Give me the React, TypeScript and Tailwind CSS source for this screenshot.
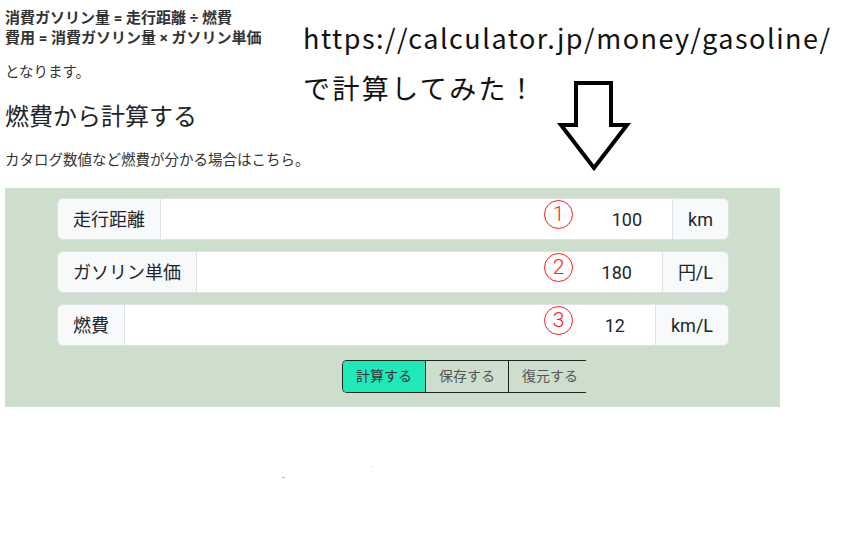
const rows = [
  { label: '走行距離', value: '100', unit: 'km', mark: '1' },
  { label: 'ガソリン単価', value: '180', unit: '円/L', mark: '2' },
  { label: '燃費', value: '12', unit: 'km/L', mark: '3' },
];

const buttons = [
  { label: '計算する', active: true },
  { label: '保存する', active: false },
  { label: '復元する', active: false },
];

function DownArrow() {
  return (
    <svg className="absolute left-[555px] top-[78px]" width="78" height="96" viewBox="555 78 78 96">
      <polygon
        points="576,83 611,83 611,125 627,125 594,168 561,125 576,125"
        fill="white"
        stroke="black"
        strokeWidth="4"
        strokeLinejoin="miter"
      />
    </svg>
  );
}

export default function App() {
  return (
    <div className="relative w-[865px] h-[535px] overflow-hidden bg-white text-[#333] font-['Roboto','Noto_Sans_CJK_JP',sans-serif]">
      <div className="flex flex-col pl-[5px] pt-[8px]">
        <p className="text-[15px] leading-[20px] font-bold">
          消費ガソリン量 = 走行距離 ÷ 燃費
          <br />
          費用 = 消費ガソリン量 × ガソリン単価
        </p>
        <p className="mt-[15px] text-[14.5px] leading-[20px]">となります。</p>
        <h3 className="mt-[18px] text-[24px] leading-[32px] text-[#212529]">燃費から計算する</h3>
        <p className="mt-[18px] text-[14.5px] leading-[20px]">カタログ数値など燃費が分かる場合はこちら。</p>

        <div className="mt-[17px] w-[775px] bg-[#cddecd] px-[52px] pt-[10px] pb-[14px]">
          <div className="flex flex-col gap-[11px]">
            {rows.map((r) => (
              <div key={r.label} className="relative flex h-[42px] w-[672px] text-[18px] text-[#212529]">
                <span className="flex items-center rounded-l-[6px] border border-[#dee2e6] bg-[#f8f9fa] px-[15px]">
                  {r.label}
                </span>
                <div className="flex flex-1 items-center justify-end border-y border-[#dee2e6] bg-white pr-[30px]">
                  {r.value}
                </div>
                <span className="flex items-center rounded-r-[6px] border border-[#dee2e6] bg-[#f8f9fa] px-[15px]">
                  {r.unit}
                </span>
                <span className="absolute left-[487px] top-[2px] flex h-[29px] w-[29px] items-center justify-center rounded-full border border-[#ff1a1a] text-[21px] leading-none font-light text-[#ff1a1a]">
                  {r.mark}
                </span>
              </div>
            ))}
          </div>
          <div className="ml-[285px] mt-[14px] flex h-[33px] w-fit border-y border-l border-[#222] rounded-l-[5px] overflow-hidden text-[14px] whitespace-nowrap">
            {buttons.map((b, i) => (
              <span
                key={b.label}
                className={`flex items-center pl-[13px] ${i === 2 ? 'pr-[8px]' : 'pr-[13px]'} ${i > 0 ? 'border-l border-[#222] text-[#555]' : ''} ${b.active ? 'bg-[#1ee9b8] text-[#333]' : ''}`}
              >
                {b.label}
              </span>
            ))}
          </div>
        </div>
      </div>

      <div className="absolute left-[303px] top-[13px] font-['Noto_Sans_CJK_JP',sans-serif] text-[27px] leading-[50px] text-[#111]">
        <p className="tracking-[1.5px]">https://calculator.jp/money/gasoline/</p>
        <p className="tracking-[2.4px]">で計算してみた！</p>
      </div>

      <DownArrow />

      <span className="absolute left-[282px] top-[477px] h-[1px] w-[3px] bg-[#bbb]" />
      <span className="absolute left-[372px] top-[466px] h-[1px] w-[1px] bg-[#ccc]" />
    </div>
  );
}
